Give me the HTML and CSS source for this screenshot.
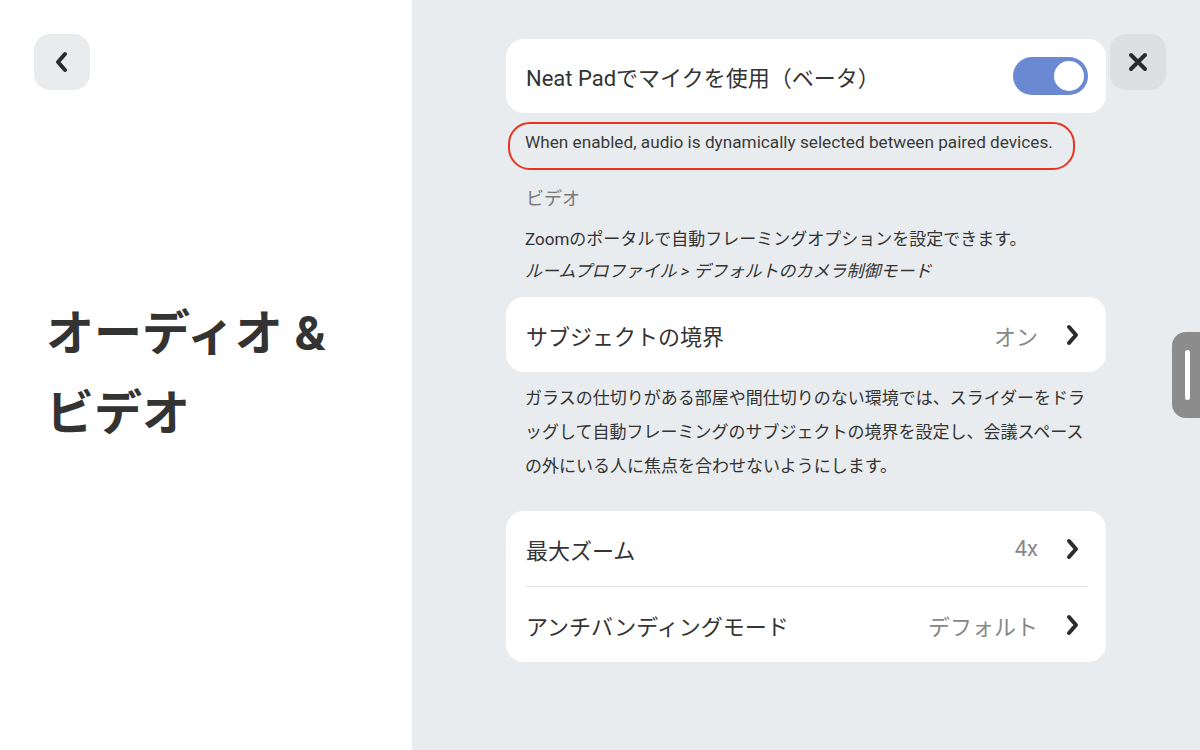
FILE: index.html
```html
<!DOCTYPE html>
<html lang="ja">
<head>
    <meta charset="UTF-8">
    <meta name="viewport" content="width=device-width, initial-scale=1.0">
    <title>オーディオ &amp; ビデオ</title>
    <link rel="stylesheet" href="styles.css">
</head>
<body>

    <aside class="side">
        <button class="icon-btn back-btn" aria-label="戻る">
            <svg width="16" height="22" viewBox="0 0 16 22"><path d="M11 3 L4 11 L11 19" fill="none" stroke="#2b2b2b" stroke-width="4" stroke-linecap="round" stroke-linejoin="round"/></svg>
        </button>
        <h1 class="page-title">オーディオ &amp; ビデオ</h1>
    </aside>

    <main class="main">
        <button class="icon-btn close-btn" aria-label="閉じる">
            <svg width="22" height="22" viewBox="0 0 22 22"><path d="M4 4 L18 18 M18 4 L4 18" fill="none" stroke="#2b2b2b" stroke-width="4" stroke-linecap="round"/></svg>
        </button>

        <div class="column">
            <div class="card first">
                <div class="row">
                    <span class="label">Neat Padでマイクを使用（ベータ）</span>
                    <span class="toggle on"><span class="knob"></span></span>
                </div>
            </div>

            <p class="hint">When enabled, audio is dynamically selected between paired devices.</p>

            <h2 class="section-title">ビデオ</h2>
            <div class="info">
                <p>Zoomのポータルで自動フレーミングオプションを設定できます。</p>
                <p class="path">ルームプロファイル &gt; デフォルトのカメラ制御モード</p>
            </div>

            <div class="card">
                <div class="row">
                    <span class="label">サブジェクトの境界</span>
                    <span class="value">オン</span>
                    <svg class="chevron" width="16" height="22" viewBox="0 0 16 22"><path d="M5 3 L12 11 L5 19" fill="none" stroke="#2b2b2b" stroke-width="4" stroke-linecap="round" stroke-linejoin="round"/></svg>
                </div>
            </div>

            <p class="desc">ガラスの仕切りがある部屋や間仕切りのない環境では、スライダーをドラッグして自動フレーミングのサブジェクトの境界を設定し、会議スペースの外にいる人に焦点を合わせないようにします。</p>

            <div class="card">
                <div class="row">
                    <span class="label">最大ズーム</span>
                    <span class="value">4x</span>
                    <svg class="chevron" width="16" height="22" viewBox="0 0 16 22"><path d="M5 3 L12 11 L5 19" fill="none" stroke="#2b2b2b" stroke-width="4" stroke-linecap="round" stroke-linejoin="round"/></svg>
                </div>
                <div class="divider"></div>
                <div class="row">
                    <span class="label">アンチバンディングモード</span>
                    <span class="value">デフォルト</span>
                    <svg class="chevron" width="16" height="22" viewBox="0 0 16 22"><path d="M5 3 L12 11 L5 19" fill="none" stroke="#2b2b2b" stroke-width="4" stroke-linecap="round" stroke-linejoin="round"/></svg>
                </div>
            </div>
        </div>

        <div class="scroll-handle"><span></span></div>
    </main>

</body>
</html>
```

FILE: styles.css
```css
body {
    margin: 0;
    padding: 0;
    display: flex;
    height: 750px;
    overflow: hidden;
    font-family: Roboto, "Noto Sans CJK JP", sans-serif;
    color: #333;
}

.icon-btn {
    width: 56px;
    height: 56px;
    border: none;
    border-radius: 16px;
    padding: 0;
    display: flex;
    align-items: center;
    justify-content: center;
    cursor: pointer;
}

/* left side */
.side {
    width: 412px;
    flex-shrink: 0;
    background-color: #fff;
    padding: 34px 48px 0 34px;
    box-sizing: border-box;
}

.back-btn {
    background-color: #e9ebec;
}

.page-title {
    margin: 204px 0 0 12px;
    font-size: 48px;
    font-weight: bold;
    line-height: 80px;
    color: #333;
}

/* right side */
.main {
    flex: 1;
    position: relative;
    background-color: #e9ecee;
    overflow: hidden;
}

.close-btn {
    position: absolute;
    top: 34px;
    right: 34px;
    background-color: #dce0e2;
}

.column {
    width: 600px;
    margin: 0 auto;
    padding-top: 39px;
}

.card {
    background-color: #fff;
    border-radius: 18px;
}

.row {
    height: 75px;
    display: flex;
    align-items: center;
    padding: 0 26px 0 20px;
    font-size: 22px;
}

.card.first .row {
    height: 74px;
    padding-right: 18px;
}

.label {
    flex: 1;
    color: #333;
}

.value {
    color: #888;
    margin-right: 26px;
}

.chevron {
    display: block;
}

.divider {
    height: 1px;
    margin: 0 18px 0 20px;
    background-color: #e2e4e6;
}

.toggle {
    width: 75px;
    height: 38px;
    border-radius: 19px;
    background-color: #6b88d3;
    position: relative;
}

.toggle .knob {
    position: absolute;
    top: 4px;
    right: 4px;
    width: 30px;
    height: 30px;
    border-radius: 50%;
    background-color: #fff;
}

.hint {
    display: inline-block;
    margin: 9px 0 0 2px;
    padding: 6px 20px 14px 15px;
    border: 2px solid #e8341c;
    border-radius: 22px;
    font-size: 17.2px;
    line-height: 24px;
    color: #3a3a3a;
}

.section-title {
    margin: 16px 0 0 20px;
    font-size: 18px;
    font-weight: normal;
    line-height: 26px;
    color: #777;
}

.info {
    margin: 11px 0 10px 19px;
}

.info p {
    margin: 0;
    font-size: 17px;
    line-height: 32px;
    color: #333;
}

.info .path {
    font-style: italic;
}

.desc {
    margin: 9px 20px 28px 19px;
    font-size: 17px;
    line-height: 34px;
    color: #333;
}

.scroll-handle {
    position: absolute;
    top: 332px;
    right: -16px;
    width: 44px;
    height: 86px;
    border-radius: 14px;
    background-color: #8c8c8c;
}

.scroll-handle span {
    position: absolute;
    top: 18px;
    left: 13px;
    width: 5px;
    height: 50px;
    border-radius: 3px;
    background-color: #fff;
}
```
